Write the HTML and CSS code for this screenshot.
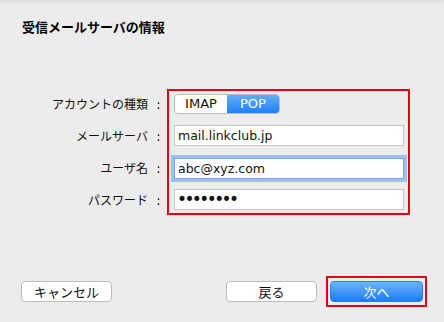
FILE: index.html
```html
<!DOCTYPE html>
<html lang="ja">
<head>
<meta charset="utf-8">
<link rel="stylesheet" href="styles.css">
</head>
<body>
<div class="window">
  <h1 class="title">受信メールサーバの情報</h1>
  <div class="form">
    <div class="labels">
      <div class="label">アカウントの種類<span class="colon">:</span></div>
      <div class="label">メールサーバ<span class="colon">:</span></div>
      <div class="label">ユーザ名<span class="colon">:</span></div>
      <div class="label">パスワード<span class="colon">:</span></div>
    </div>
    <div class="controls">
      <div class="segmented">
        <div class="seg">IMAP</div>
        <div class="seg seg-on">POP</div>
      </div>
      <div class="field">mail.linkclub.jp</div>
      <div class="field field-focus">abc@xyz.com</div>
      <div class="field dots">••••••••</div>
    </div>
  </div>
  <div class="footer">
    <div class="btn">キャンセル</div>
    <div class="right">
      <div class="btn">戻る</div>
      <div class="hl">
        <div class="btn btn-primary">次へ</div>
      </div>
    </div>
  </div>
</div>
</body>
</html>
```
FILE: styles.css
```css
html, body {
  margin: 0;
  padding: 0;
}
body {
  width: 444px;
  height: 322px;
  background: linear-gradient(#dedede 0, #ececec 4px) #ececec;
  font-family: "Noto Sans CJK JP", "DejaVu Sans", sans-serif;
  color: #111;
}
.window {
  height: 322px;
  display: flex;
  flex-direction: column;
}
.title {
  margin: 0;
  padding: 19px 0 0 22px;
  font-size: 13px;
  line-height: 16px;
  font-weight: bold;
  color: #000;
}
.form {
  margin-top: 54px;
  display: flex;
  align-items: flex-start;
}
.labels {
  width: 160px;
  padding-top: 4px;
  display: flex;
  flex-direction: column;
  gap: 11px;
  margin-right: 7px;
}
.label {
  height: 21px;
  line-height: 21px;
  font-size: 12px;
  text-align: right;
  color: #111;
  white-space: nowrap;
}
.colon {
  display: inline-block;
  margin-left: 8px;
  width: 4px;
  text-align: right;
}
.controls {
  border: 2px solid #e60012;
  padding: 2px 0 3px 5px;
  box-sizing: border-box;
  width: 243px;
  display: flex;
  flex-direction: column;
  gap: 11px;
}
.segmented {
  display: flex;
  width: 106px;
  height: 20px;
  border: 1px solid #bcbcbc;
  border-radius: 4px;
  box-sizing: border-box;
  overflow: hidden;
  background: #fff;
  margin-top: 1px;
}
.seg {
  flex: 1;
  text-align: center;
  font-family: "DejaVu Sans", sans-serif;
  font-size: 13px;
  line-height: 18px;
  color: #111;
}
.seg-on {
  background: linear-gradient(#62adfa, #1f80f6);
  color: #fff;
}
.field {
  width: 230px;
  height: 21px;
  box-sizing: border-box;
  border: 1px solid #c6c6c6;
  background: #fff;
  padding-left: 3px;
  font-family: "DejaVu Sans", sans-serif;
  font-size: 12.5px;
  line-height: 19px;
  color: #111;
}
.field-focus {
  border-color: #79a6e6;
  box-shadow: 0 0 0 3px #9cc1f0;
  margin-top: 1px;
  margin-bottom: -1px;
}
.dots {
  font-size: 17px;
  letter-spacing: -2.6px;
  line-height: 19px;
  padding-left: 2px;
}
.footer {
  margin-top: auto;
  padding: 0 17px 15px 21px;
  display: flex;
  justify-content: space-between;
  align-items: center;
}
.right {
  display: flex;
  align-items: center;
  gap: 9px;
}
.btn {
  width: 91px;
  height: 21px;
  box-sizing: border-box;
  border: 1px solid #bcbcbc;
  border-radius: 4px;
  background: #fff;
  text-align: center;
  font-size: 13px;
  line-height: 19px;
  color: #111;
}
.hl {
  border: 2px solid #e60012;
  padding: 3px 2px 3px 2px;
}
.btn-primary {
  width: 93px;
  border: 1px solid #2a7fe8;
  background: linear-gradient(#6db4fb, #1c7cf5);
  color: #fff;
}
```
